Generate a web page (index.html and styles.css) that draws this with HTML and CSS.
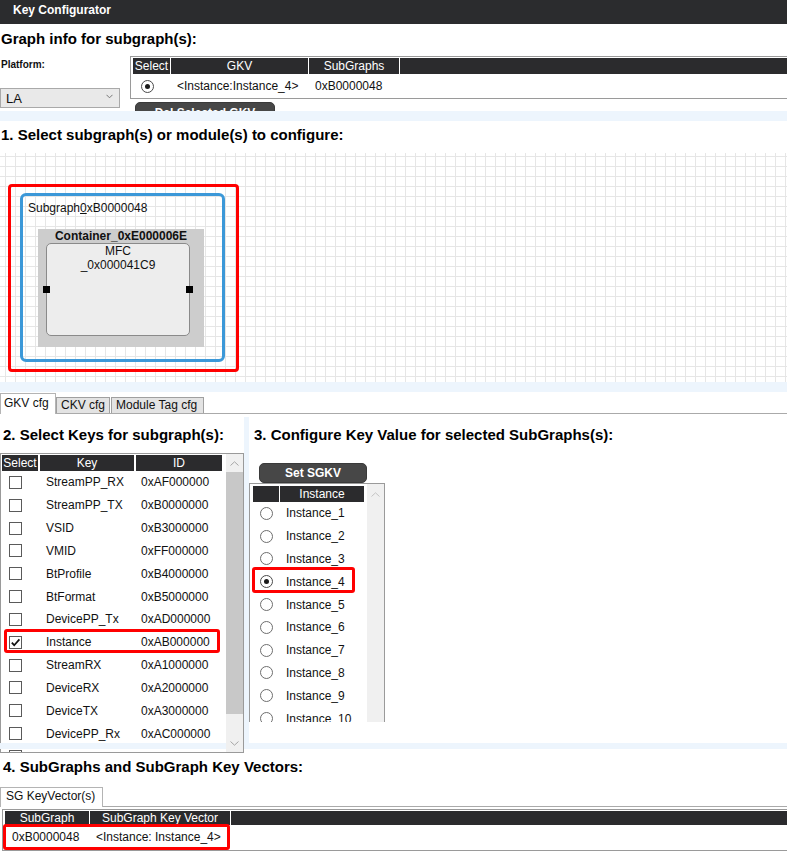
FILE: index.html
```html
<!DOCTYPE html>
<html>
<head>
<meta charset="utf-8">
<title>Key Configurator</title>
<link rel="stylesheet" href="styles.css">
</head>
<body>
<div class="titlebar">Key Configurator</div>

<h2 class="h h-graph">Graph info for subgraph(s):</h2>
<div class="gi-body">
  <div class="platform">
    <div class="platform-label">Platform:</div>
    <div class="select"><span>LA</span>
      <svg class="sel-chev" width="7" height="5" viewBox="0 0 7 5"><polyline points="0.5,0.8 3.5,3.8 6.5,0.8" fill="none" stroke="#777" stroke-width="1"/></svg>
    </div>
  </div>
  <div class="gkv-wrap">
    <div class="gkv">
      <div class="gkv-head"><div>Select</div><div>GKV</div><div>SubGraphs</div><div></div></div>
      <div class="gkv-row"><div class="cell-radio"><span class="radio on"></span></div><div class="pad6">&lt;Instance:Instance_4&gt;</div><div class="pad6">0xB0000048</div><div></div></div>
    </div>
    <div class="btn del">Del Selected GKV</div>
  </div>
</div>
<div class="band"></div>

<h2 class="h h-sel">1. Select subgraph(s) or module(s) to configure:</h2>
<div class="canvas">
  <div class="redsel">
    <div class="subgraph">
      <div class="sg-label">Subgraph<u>0</u>xB0000048</div>
      <div class="container">
        <div class="ct-title">Container_0xE000006E</div>
        <div class="module">
          <div>MFC</div>
          <div>_0x000041C9</div>
          <span class="port port-l"></span>
          <span class="port port-r"></span>
        </div>
      </div>
    </div>
  </div>
</div>
<div class="band"></div>

<div class="tabs">
  <div class="tab active t-gkv">GKV cfg</div>
  <div class="tab t-ckv">CKV cfg</div>
  <div class="tab t-mod">Module Tag cfg</div>
</div>

<div class="cfg">
  <div class="col-left">
    <h2 class="h h-2">2. Select Keys for subgraph(s):</h2>
    <div class="listbox keys">
      <div class="lb-main">
        <div class="k-head"><div>Select</div><div>Key</div><div>ID</div></div>
        <div class="k-row"><span class="cb"></span><span class="pad6">StreamPP_RX</span><span class="pad6">0xAF000000</span></div>
        <div class="k-row"><span class="cb"></span><span class="pad6">StreamPP_TX</span><span class="pad6">0xB0000000</span></div>
        <div class="k-row"><span class="cb"></span><span class="pad6">VSID</span><span class="pad6">0xB3000000</span></div>
        <div class="k-row"><span class="cb"></span><span class="pad6">VMID</span><span class="pad6">0xFF000000</span></div>
        <div class="k-row"><span class="cb"></span><span class="pad6">BtProfile</span><span class="pad6">0xB4000000</span></div>
        <div class="k-row"><span class="cb"></span><span class="pad6">BtFormat</span><span class="pad6">0xB5000000</span></div>
        <div class="k-row"><span class="cb"></span><span class="pad6">DevicePP_Tx</span><span class="pad6">0xAD000000</span></div>
        <div class="k-row"><span class="cb on"><svg width="11" height="11" viewBox="0 0 11 11"><polyline points="1.8,5.6 4.2,8.2 9.4,2.4" fill="none" stroke="#111" stroke-width="1.7"/></svg></span><span class="pad6">Instance</span><span class="pad6">0xAB000000</span></div>
        <div class="k-row"><span class="cb"></span><span class="pad6">StreamRX</span><span class="pad6">0xA1000000</span></div>
        <div class="k-row"><span class="cb"></span><span class="pad6">DeviceRX</span><span class="pad6">0xA2000000</span></div>
        <div class="k-row"><span class="cb"></span><span class="pad6">DeviceTX</span><span class="pad6">0xA3000000</span></div>
        <div class="k-row"><span class="cb"></span><span class="pad6">DevicePP_Rx</span><span class="pad6">0xAC000000</span></div>
        <div class="k-row"><span class="cb"></span><span class="pad6"></span><span class="pad6"></span></div>
      </div>
      <div class="sbar">
        <div class="sb-btn"><svg width="9" height="5" viewBox="0 0 9 5"><polyline points="0.5,4.5 4.5,0.8 8.5,4.5" fill="none" stroke="#a6a6a6" stroke-width="1"/></svg></div>
        <div class="sb-thumb"></div>
        <div class="sb-track"></div>
        <div class="sb-btn"><svg width="9" height="5" viewBox="0 0 9 5"><polyline points="0.5,0.5 4.5,4.2 8.5,0.5" fill="none" stroke="#a6a6a6" stroke-width="1"/></svg></div>
      </div>
      <div class="mark mark-key"></div>
    </div>
  </div>
  <div class="vsep"></div>
  <div class="col-right">
    <h2 class="h h-3">3. Configure Key Value for selected SubGraphs(s):</h2>
    <div class="btn setsgkv">Set SGKV</div>
    <div class="listbox inst">
      <div class="lb-main">
        <div class="i-head"><div></div><div>Instance</div></div>
        <div class="i-row"><span class="radio"></span><span class="pad6">Instance_1</span></div>
        <div class="i-row"><span class="radio"></span><span class="pad6">Instance_2</span></div>
        <div class="i-row"><span class="radio"></span><span class="pad6">Instance_3</span></div>
        <div class="i-row"><span class="radio on"></span><span class="pad6">Instance_4</span></div>
        <div class="i-row"><span class="radio"></span><span class="pad6">Instance_5</span></div>
        <div class="i-row"><span class="radio"></span><span class="pad6">Instance_6</span></div>
        <div class="i-row"><span class="radio"></span><span class="pad6">Instance_7</span></div>
        <div class="i-row"><span class="radio"></span><span class="pad6">Instance_8</span></div>
        <div class="i-row"><span class="radio"></span><span class="pad6">Instance_9</span></div>
        <div class="i-row"><span class="radio"></span><span class="pad6">Instance_10</span></div>
      </div>
      <div class="sbar light">
        <div class="sb-btn"><svg width="9" height="5" viewBox="0 0 9 5"><polyline points="0.5,4.5 4.5,0.8 8.5,4.5" fill="none" stroke="#c4c4c4" stroke-width="1"/></svg></div>
        <div class="sb-track"></div>
        <div class="sb-btn"><svg width="9" height="5" viewBox="0 0 9 5"><polyline points="0.5,0.5 4.5,4.2 8.5,0.5" fill="none" stroke="#c4c4c4" stroke-width="1"/></svg></div>
      </div>
      <div class="mark mark-inst"></div>
    </div>
  </div>
</div>
<div class="band band-over"></div>

<h2 class="h h-4">4. SubGraphs and SubGraph Key Vectors:</h2>
<div class="tabs tabs2">
  <div class="tab active t-sg">SG KeyVector(s)</div>
</div>
<div class="sgkv">
  <div class="s-head"><div>SubGraph</div><div>SubGraph Key Vector</div><div></div></div>
  <div class="s-row"><div class="pad7">0xB0000048</div><div class="pad6">&lt;Instance: Instance_4&gt;</div></div>
  <div class="mark mark-sg"></div>
</div>
</body>
</html>
```
FILE: styles.css
```css
* { box-sizing: border-box; }
html, body { margin: 0; padding: 0; background: #fff; }
body {
  font-family: "Liberation Sans", Arial, sans-serif;
  font-size: 12px;
  color: #111;
  width: 787px;
  height: 854px;
  overflow: hidden;
}

.titlebar {
  height: 24px;
  background: #2b2c2e;
  color: #fff;
  font-weight: bold;
  font-size: 12px;
  line-height: 20px;
  padding-left: 13px;
}

.h { font-size: 15px; font-weight: bold; line-height: 18px; margin: 0; color: #000; }
.h-graph { margin-top: 6px; padding-left: 1px; }
.h-sel { margin: 5px 0 9px; padding-left: 1px; }
.h-2 { margin-top: 12px; padding-left: 3px; white-space: nowrap; }
.h-3 { margin-top: 12px; padding-left: 5px; white-space: nowrap; }
.h-4 { margin-top: 9px; padding-left: 3px; }

.band { height: 10px; background: #edf5fd; }

/* Graph info */
.gi-body { display: flex; height: 63px; overflow: hidden; }
.platform { width: 120px; flex: none; padding-top: 11px; }
.platform-label { font-size: 10px; font-weight: bold; line-height: 12px; padding-left: 1px; }
.select {
  margin-top: 17px;
  height: 20px;
  border: 1px solid #a9a9a9;
  background: #e9e9e9;
  display: flex;
  align-items: center;
  justify-content: space-between;
  padding: 0 6px 0 5px;
  font-size: 13px;
  color: #111;
}
.sel-chev { margin-top: -3px; }

.gkv-wrap { flex: 1; margin-left: 10px; margin-right: -2px; }
.gkv {
  margin-top: 8px;
  border: 1px solid #9a9a9a;
  padding: 1px 0 0 2px;
}
.gkv-head, .gkv-row {
  display: grid;
  grid-template-columns: 37px 137px 90px 1fr;
  column-gap: 1px;
}
.gkv-head > div {
  background: #2b2b2d;
  color: #fff;
  height: 16px;
  line-height: 16px;
  text-align: center;
}
.gkv-row { height: 24px; align-items: center; }
.cell-radio { padding-left: 8px; display: flex; align-items: center; }
.pad6 { padding-left: 6px; white-space: nowrap; }
.pad7 { padding-left: 7px; white-space: nowrap; }

.btn {
  background: #474747;
  border: 1px solid #3a3a3a;
  color: #fff;
  font-weight: bold;
  font-size: 12px;
  text-align: center;
  border-radius: 5px;
}
.btn.del {
  margin: 3px 0 0 5px;
  width: 140px;
  height: 20px;
  line-height: 20px;
  border-radius: 5px 5px 0 0;
}

.radio {
  display: inline-block;
  width: 13px;
  height: 13px;
  border: 1px solid #6e6e6e;
  border-radius: 50%;
  background: #fff;
  position: relative;
  flex: none;
}
.radio.on { border-color: #4a4a4a; }
.radio.on::after {
  content: "";
  position: absolute;
  left: 3px;
  top: 3px;
  width: 5px;
  height: 5px;
  border-radius: 50%;
  background: #1a1a1a;
}

/* Canvas */
.canvas {
  position: relative;
  height: 229px;
  background-color: #fff;
  background-image:
    linear-gradient(#e6e6e6 1px, transparent 1px),
    linear-gradient(90deg, #e6e6e6 1px, transparent 1px);
  background-size: 10px 10px;
  background-position: 5px 3px;
}
.redsel {
  position: absolute;
  left: 8px;
  top: 31px;
  width: 231px;
  height: 188px;
  border: 3px solid #ff0000;
  border-radius: 4px;
}
.subgraph {
  margin: 6px 0 0 9px;
  width: 205px;
  height: 169px;
  border: 3px solid #3b98d8;
  border-radius: 6px;
}
.sg-label { padding: 5px 0 0 5px; line-height: 14px; font-size: 12px; }
.container {
  margin: 14px 0 0 15px;
  width: 166px;
  height: 118px;
  background: #cdcdcd;
}
.ct-title { font-weight: bold; text-align: center; line-height: 14px; }
.module {
  position: relative;
  margin-left: 8px;
  width: 144px;
  height: 93px;
  border: 1px solid #8a8a8a;
  border-radius: 5px;
  background: #ededed;
  text-align: center;
  line-height: 14px;
}
.port {
  position: absolute;
  top: 42px;
  width: 7px;
  height: 7px;
  background: #000;
}
.port-l { left: -4px; }
.port-r { left: 139px; }

/* Tabs */
.tabs {
  display: flex;
  align-items: flex-end;
  height: 22px;
  border-bottom: 1px solid #aaa;
  padding-top: 1px;
}
.tab {
  border: 1px solid #a0a0a0;
  border-bottom: none;
  font-size: 12px;
  color: #111;
  white-space: nowrap;
}
.tab.active {
  height: 21px;
  margin-bottom: -1px;
  background: #fff;
  border-color: #b4b4b4;
  line-height: 16px;
  padding: 1px 0 0 3px;
}
.tab:not(.active) {
  height: 16px;
  background: #e3e3e3;
  line-height: 14px;
  padding: 0 0 0 4px;
}
.t-gkv { width: 56px; }
.t-ckv { width: 54px; }
.t-mod { width: 93px; margin-left: 1px; }

.tabs2 { height: 20px; padding-top: 0; margin-top: 11px; }
.tabs2 .tab.active { height: 20px; padding: 0 0 0 5px; width: 103px; }

/* Config section */
.cfg { display: flex; height: 329px; }
.col-left { width: 244px; flex: none; }
.vsep { width: 5px; flex: none; margin-top: 3px; background: #edf5fd; }
.col-right { flex: 1; }

.listbox {
  position: relative;
  display: flex;
  border: 1px solid #9a9a9a;
}
.lb-main { overflow: hidden; }

.keys {
  margin-top: 9px;
  height: 300px;
  border-right: none;
}
.keys .lb-main { width: 225px; padding-top: 1px; }
.k-head {
  display: grid;
  grid-template-columns: 36px 94px 86px;
  column-gap: 2px;
  margin-left: 1px;
}
.k-head > div, .i-head > div {
  background: #2b2b2d;
  color: #fff;
  height: 16px;
  line-height: 16px;
  text-align: center;
}
.k-row {
  display: grid;
  grid-template-columns: 39px 95px 1fr;
  align-items: center;
  height: 22.83px;
}
.cb {
  margin-left: 8px;
  width: 13px;
  height: 13px;
  border: 1px solid #5a5a5a;
  background: #fff;
  display: flex;
  align-items: center;
  justify-content: center;
}

.sbar {
  position: relative;
  z-index: 2;
  width: 18px;
  flex: none;
  display: flex;
  flex-direction: column;
  background: #f0f0f0;
  border-right: 1px solid #9a9a9a;
}
.sb-btn {
  height: 17px;
  display: flex;
  align-items: center;
  justify-content: center;
  flex: none;
}
.keys .sb-btn:first-child { height: 18px; }
.sb-thumb { height: 242px; background: #c8c8c8; flex: none; }
.sb-track { flex: 1; }

.btn.setsgkv {
  margin: 19px 0 0 10px;
  width: 108px;
  height: 20px;
  line-height: 18px;
}
.inst {
  height: 239px;
  width: 136px;
  border-bottom: none;
  overflow: hidden;
}
.inst .lb-main { width: 117px; padding: 2px 0 0 3px; flex: none; }
.inst .sbar { width: 17px; border-right: none; height: 250px; }
.inst .sbar .sb-btn:first-child { margin-top: 2px; }
.i-head {
  display: grid;
  grid-template-columns: 26px 84px;
  column-gap: 1px;
}
.i-row {
  display: grid;
  grid-template-columns: 27px 1fr;
  align-items: center;
  justify-items: start;
  height: 22.8px;
}
.i-row .radio { margin-left: 7px; }

.band-over { position: relative; z-index: 1; height: 6px; }

.mark {
  position: absolute;
  border: 3px solid #ff0000;
  border-radius: 3px;
}
.mark-key { left: 3px; top: 175px; width: 216px; height: 24px; }
.mark-inst { left: 2px; top: 83px; width: 103px; height: 26px; }

/* SG key vector table */
.sgkv {
  position: relative;
  margin: 2px -2px 0 2px;
  border: 1px solid #9a9a9a;
  padding: 1px 0 0 2px;
}
.s-head {
  display: grid;
  grid-template-columns: 84px 140px 1fr;
  column-gap: 1px;
}
.s-head > div {
  background: #2b2b2d;
  color: #fff;
  height: 14px;
  line-height: 14px;
  text-align: center;
}
.s-row {
  display: grid;
  grid-template-columns: 85px 1fr;
  height: 25px;
  line-height: 25px;
}
.mark-sg { left: 0; top: 14px; width: 227px; height: 26px; }
```
